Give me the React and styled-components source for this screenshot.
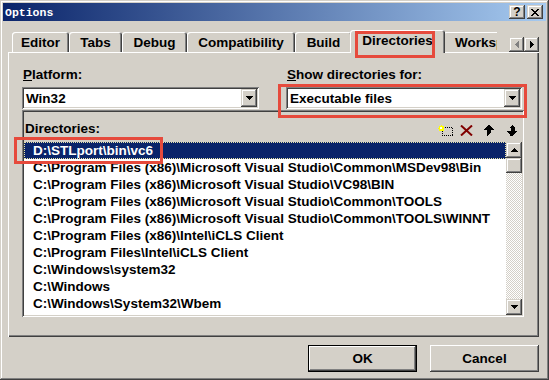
import React from "react";
import styled, { createGlobalStyle } from "styled-components";

const face = "#D4D0C8";
const raised = `inset -1px -1px #404040, inset 1px 1px #fff, inset -2px -2px #808080`;
const raisedSoft = `inset -1px -1px #404040, inset 1px 1px ${face}, inset -2px -2px #808080, inset 2px 2px #fff`;
const sunken = `inset 1px 1px #808080, inset -1px -1px #fff, inset 2px 2px #404040, inset -2px -2px ${face}`;
const uiFont = `"Liberation Sans", Arial, sans-serif`;

const GlobalStyle = createGlobalStyle`
  html, body { margin: 0; padding: 0; background: ${face}; }
  body { font-family: ${uiFont}; }
  * { box-sizing: border-box; }
`;

const Window = styled.div`
  position: relative;
  width: 549px;
  height: 380px;
  padding: 3px;
  background: ${face};
  box-shadow: ${raisedSoft};
  display: flex;
  flex-direction: column;
  overflow: hidden;
`;

const TitleBar = styled.div`
  flex: none;
  height: 18px;
  display: flex;
  align-items: center;
  padding: 0 3px 0 2px;
  background: linear-gradient(to right, #0a246a, #a6caf0);
`;

const TitleText = styled.span`
  flex: 1;
  color: #fff;
  font: bold 11.5px "Liberation Mono", monospace;
`;

const CaptionButton = styled.div`
  width: 16px;
  height: 14px;
  margin-left: ${(p) => p.$gap || 0}px;
  background: ${face};
  box-shadow: ${raisedSoft};
  display: flex;
  align-items: center;
  justify-content: center;
  font: bold 12px ${uiFont};
  color: #000;
`;

const Body = styled.div`
  flex: 1;
  display: flex;
  flex-direction: column;
  padding: 9px 7px 0 5px;
`;

const TabStrip = styled.div`
  position: relative;
  z-index: 2;
  height: 23px;
  margin-bottom: -1px;
  display: flex;
  align-items: flex-end;
`;

const TabList = styled.div`
  width: 489px;
  height: 23px;
  padding-left: 4px;
  display: flex;
  align-items: flex-end;
  overflow: hidden;
`;

const Tab = styled.div`
  flex: none;
  position: relative;
  z-index: ${(p) => (p.$active ? 2 : 1)};
  width: ${(p) => (p.$active ? p.$w + 4 : p.$w)}px;
  height: ${(p) => (p.$active ? 23 : 20)}px;
  margin: ${(p) => (p.$active ? "0 -2px 0" : "0 0 1px")};
  padding: ${(p) => (p.$active ? "0 0 3px" : p.$lead ? `0 0 0 ${p.$lead}px` : "0")};
  background: ${face};
  border-radius: 3px 3px 0 0;
  box-shadow: inset 1px 1px #fff, inset -1px 0 #404040, inset -2px 0 #808080;
  display: flex;
  align-items: center;
  justify-content: ${(p) => (p.$lead ? "flex-start" : "center")};
  font: bold 13.5px ${uiFont};
  color: #000;
  white-space: nowrap;
`;

const TabArrows = styled.div`
  display: flex;
  margin-left: 12px;
  margin-bottom: 1px;
`;

const TabArrow = styled.div`
  width: 15px;
  height: 15px;
  background: ${face};
  box-shadow: ${raisedSoft};
  display: flex;
  align-items: center;
  justify-content: center;
`;

const Panel = styled.div`
  position: relative;
  z-index: 1;
  width: 531px;
  height: 285px;
  padding: 15px 15px 0 14px;
  background: ${face};
  box-shadow: inset 1px 1px #fff, inset -1px -1px #404040, inset -2px -2px #808080;
`;

const FieldRow = styled.div`
  display: grid;
  grid-template-columns: 237px 236px;
  column-gap: 27px;
`;

const Field = styled.div`
  display: flex;
  flex-direction: column;
  gap: 4px;
`;

const Label = styled.div`
  padding-left: 1px;
  font: bold 13.5px/16px ${uiFont};
  color: #000;
  u { text-decoration: underline; }
`;

const Combo = styled.div`
  height: 22px;
  padding: 2px;
  background: #fff;
  box-shadow: ${sunken};
  display: flex;
  align-items: center;
`;

const ComboText = styled.span`
  flex: 1;
  padding-left: 2px;
  font: bold 13.5px ${uiFont};
  color: #000;
`;

const DropButton = styled.div`
  width: 16px;
  height: 18px;
  background: ${face};
  box-shadow: ${raisedSoft};
  display: flex;
  align-items: center;
  justify-content: center;
`;

const Frame = styled.div`
  margin-top: 1px;
  width: 502px;
  height: 207px;
  padding: 2px;
  box-shadow: ${sunken};
  display: flex;
  flex-direction: column;
`;

const FrameHeader = styled.div`
  height: 30px;
  flex: none;
  display: flex;
  align-items: flex-start;
  padding: 9px 4px 0 1px;
`;

const FrameTitle = styled(Label)`
  flex: 1;
  padding-left: 0;
`;

const ToolIcon = styled.svg`
  margin-top: 4px;
  margin-left: ${(p) => p.$gap || 0}px;
  shape-rendering: ${(p) => (p.$smooth ? "auto" : "crispEdges")};
`;

const ListArea = styled.div`
  flex: 1;
  display: flex;
`;

const List = styled.div`
  flex: 1;
  background: #fff;
  overflow: hidden;
`;

const Item = styled.div`
  height: 17px;
  padding-left: 9px;
  font: bold 13.5px/17px ${uiFont};
  white-space: nowrap;
  color: ${(p) => (p.$selected ? "#fff" : "#000")};
  background: ${(p) => (p.$selected ? "#0a246a" : "transparent")};
  outline: ${(p) => (p.$selected ? "1px dotted #e8e4a8" : "none")};
  outline-offset: -1px;
`;

const ScrollBar = styled.div`
  width: 16px;
  display: flex;
  flex-direction: column;
  background: repeating-conic-gradient(#fff 0 25%, ${face} 0 50%) 0 0 / 2px 2px;
`;

const ScrollButton = styled.div`
  flex: none;
  height: 16px;
  background: ${face};
  box-shadow: ${raisedSoft};
  display: flex;
  align-items: center;
  justify-content: center;
`;

const Thumb = styled.div`
  height: 15px;
  background: ${face};
  box-shadow: ${raisedSoft};
`;

const Track = styled.div`
  flex: 1;
`;

const ButtonRow = styled.div`
  display: flex;
  justify-content: flex-end;
  gap: 13px;
  margin-top: 8px;
`;

const Button = styled.button`
  width: 109px;
  height: 27px;
  border: none;
  padding: 0;
  background: ${face};
  font: bold 13.5px ${uiFont};
  color: #000;
  box-shadow: ${(p) =>
    p.$default
      ? `inset 0 0 0 1px #000, inset -2px -2px #404040, inset 2px 2px #fff, inset -3px -3px #808080`
      : raised};
`;

const Marker = styled.div`
  position: absolute;
  z-index: 5;
  left: ${(p) => p.$x}px;
  top: ${(p) => p.$y}px;
  width: ${(p) => p.$w}px;
  height: ${(p) => p.$h}px;
  border: 3px solid #e64a3c;
  pointer-events: none;
`;

const UpTri = () => (
  <svg width="7" height="4" shapeRendering="crispEdges">
    <path d="M3 0h1v1h1v1h1v1h1v1H0V3h1V2h1V1h1z" fill="#000" />
  </svg>
);

const DownTri = () => (
  <svg width="7" height="4" shapeRendering="crispEdges">
    <path d="M0 0h7v1H6v1H5v1H4v1H3V3H2V2H1V1H0z" fill="#000" />
  </svg>
);

const tabs = [
  { label: "Editor", w: 57 },
  { label: "Tabs", w: 53 },
  { label: "Debug", w: 65 },
  { label: "Compatibility", w: 108 },
  { label: "Build", w: 57 },
  { label: "Directories", w: 91, active: true },
  { label: "Workspace", w: 90, lead: 12 },
];

const dirs = [
  "D:\\STLport\\bin\\vc6",
  "C:\\Program Files (x86)\\Microsoft Visual Studio\\Common\\MSDev98\\Bin",
  "C:\\Program Files (x86)\\Microsoft Visual Studio\\VC98\\BIN",
  "C:\\Program Files (x86)\\Microsoft Visual Studio\\Common\\TOOLS",
  "C:\\Program Files (x86)\\Microsoft Visual Studio\\Common\\TOOLS\\WINNT",
  "C:\\Program Files (x86)\\Intel\\iCLS Client",
  "C:\\Program Files\\Intel\\iCLS Client",
  "C:\\Windows\\system32",
  "C:\\Windows",
  "C:\\Windows\\System32\\Wbem",
];

export default function App() {
  return (
    <>
      <GlobalStyle />
      <Window>
        <TitleBar>
          <TitleText>Options</TitleText>
          <CaptionButton>?</CaptionButton>
          <CaptionButton $gap={2}>
            <svg width="8" height="7" shapeRendering="crispEdges">
              <path d="M0 0h2v1h1v1h2V1h1V0h2v1H7v1H6v1H5v1h1v1h1v1h1v1H6V6H5V5H3v1H2v1H0V6h1V5h1V4h1V3H2V2H1V1H0z" fill="#000" />
            </svg>
          </CaptionButton>
        </TitleBar>

        <Body>
          <TabStrip>
            <TabList>
              {tabs.map((t) => (
                <Tab key={t.label} $w={t.w} $active={t.active} $lead={t.lead}>
                  {t.label}
                </Tab>
              ))}
            </TabList>
            <TabArrows>
              <TabArrow>
                <svg width="4" height="7" shapeRendering="crispEdges">
                  <path d="M3 0h1v7H3V6H2V5H1V4H0V3h1V2h1V1h1z" fill="#808080" />
                </svg>
              </TabArrow>
              <TabArrow>
                <svg width="4" height="7" shapeRendering="crispEdges">
                  <path d="M0 0h1v1h1v1h1v1h1v1H3v1H2v1H1v1H0z" fill="#000" />
                </svg>
              </TabArrow>
            </TabArrows>
          </TabStrip>

          <Panel>
            <FieldRow>
              <Field>
                <Label>
                  <u>P</u>latform:
                </Label>
                <Combo>
                  <ComboText>Win32</ComboText>
                  <DropButton>
                    <DownTri />
                  </DropButton>
                </Combo>
              </Field>
              <Field>
                <Label>
                  <u>S</u>how directories for:
                </Label>
                <Combo>
                  <ComboText>Executable files</ComboText>
                  <DropButton>
                    <DownTri />
                  </DropButton>
                </Combo>
              </Field>
            </FieldRow>

            <Frame>
              <FrameHeader>
                <FrameTitle>Directories:</FrameTitle>
                <ToolIcon width="15" height="11" viewBox="0 0 15 11">
                  <rect x="4.5" y="2.5" width="10" height="8" fill="none" stroke="#000" strokeDasharray="1 1" />
                  <path d="M3 0v6M0 3h6M1 1h1v1H1zM4 1h1v1H4zM1 4h1v1H1zM4 4h1v1H4z" stroke="#ffff00" fill="#ffff00" strokeWidth="1" />
                  <rect x="2" y="2" width="2" height="2" fill="#fff" />
                </ToolIcon>
                <ToolIcon $gap={7} $smooth width="13" height="11" viewBox="0 0 13 11">
                  <path d="M1 0.5L12 10.5M12 0.5L1 10.5" stroke="#800000" strokeWidth="2" />
                </ToolIcon>
                <ToolIcon $gap={10} width="12" height="11" viewBox="0 0 12 11">
                  <path d="M6 0h1v1h1v1h1v1h1v1h1v1H8v3H7v1H6v1H5v1H4V5H1V4h1V3h1V2h1V1h1V0z" fill="#000" />
                </ToolIcon>
                <ToolIcon $gap={10} width="13" height="11" viewBox="0 0 13 11">
                  <path d="M7 0h1v1h1v1h1v4h2v1h-1v1h-1v1H9v1H8v1H7v1H6v-1H5V9H4V8H3V7H2V6h4V3H5V2h1V1h1z" fill="#000" />
                </ToolIcon>
              </FrameHeader>
              <ListArea>
                <List>
                  {dirs.map((d, i) => (
                    <Item key={d} $selected={i === 0}>
                      {d}
                    </Item>
                  ))}
                </List>
                <ScrollBar>
                  <ScrollButton>
                    <UpTri />
                  </ScrollButton>
                  <Thumb />
                  <Track />
                  <ScrollButton>
                    <DownTri />
                  </ScrollButton>
                </ScrollBar>
              </ListArea>
            </Frame>
          </Panel>

          <ButtonRow>
            <Button $default>OK</Button>
            <Button>Cancel</Button>
          </ButtonRow>
        </Body>

        <Marker $x={355} $y={31} $w={80} $h={27} />
        <Marker $x={278} $y={84} $w={249} $h={34} />
        <Marker $x={14} $y={137} $w={149} $h={27} />
      </Window>
    </>
  );
}
